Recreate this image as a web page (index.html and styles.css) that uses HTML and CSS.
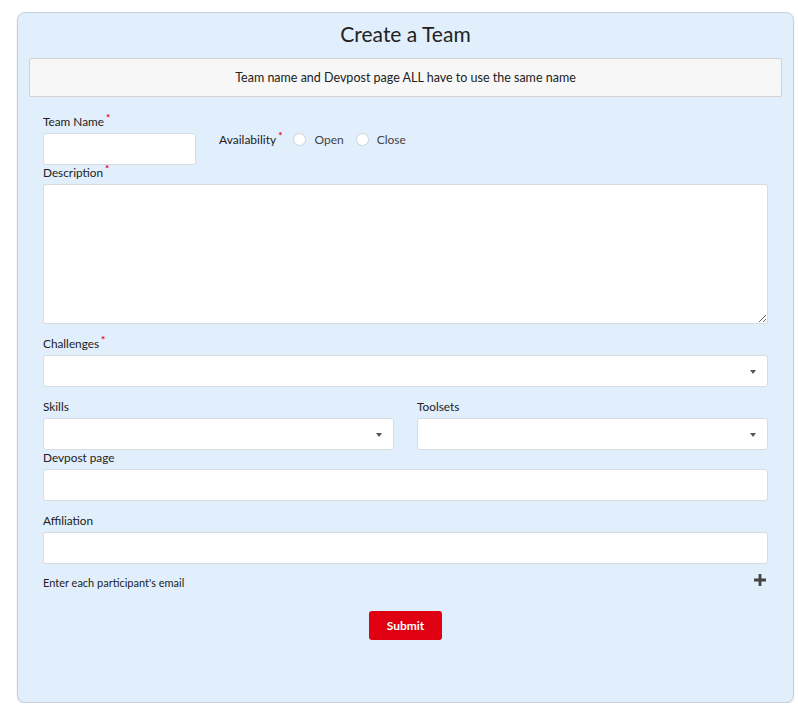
FILE: index.html
```html
<!DOCTYPE html>
<html>
<head>
<meta charset="utf-8">
<link rel="stylesheet" href="styles.css">
</head>
<body>
<div class="card">
  <h1 class="title">Create a Team</h1>
  <div class="notice">Team name and Devpost page ALL have to use the same name</div>
  <form class="form">
    <div class="row-top">
      <div class="field-name">
        <label class="label">Team Name<span class="req">*</span></label>
        <input class="input" type="text">
      </div>
      <div class="avail">
        <span class="avail-label">Availability<span class="req">*</span></span>
        <span class="radio"></span><span class="radio-text">Open</span>
        <span class="radio"></span><span class="radio-text">Close</span>
      </div>
    </div>
    <div class="group gap">
      <label class="label">Description<span class="req">*</span></label>
      <textarea class="textarea"></textarea>
    </div>
    <div class="group gap">
      <label class="label">Challenges<span class="req">*</span></label>
      <div class="select"><span class="caret"></span></div>
    </div>
    <div class="row-two">
      <div class="group">
        <label class="label">Skills</label>
        <div class="select"><span class="caret"></span></div>
      </div>
      <div class="group">
        <label class="label">Toolsets</label>
        <div class="select"><span class="caret"></span></div>
      </div>
    </div>
    <div class="group gap">
      <label class="label">Devpost page</label>
      <input class="input full" type="text">
    </div>
    <div class="group gap2">
      <label class="label">Affiliation</label>
      <input class="input full" type="text">
    </div>
    <div class="email-row">
      <span class="email-text">Enter each participant's email</span>
      <svg class="plus" width="12" height="12" viewBox="0 0 12 12"><path d="M4.6 0h2.8v4.6H12v2.8H7.4V12H4.6V7.4H0V4.6h4.6z" fill="#444"/></svg>
    </div>
    <div class="actions">
      <button class="submit" type="button">Submit</button>
    </div>
  </form>
</div>
</body>
</html>
```
FILE: styles.css
```css
html, body {
  margin: 0;
  padding: 0;
  background: #ffffff;
}
body {
  font-family: Lato, "Open Sans", Arial, sans-serif;
  color: #222;
}
.card {
  margin: 12px 0 0 17px;
  width: 753px;
  height: 689px;
  background: #e1eefc;
  border: 1px solid #c6d0dc;
  border-radius: 8px;
  box-shadow: 0 1px 2px rgba(0,0,0,0.12);
  padding: 0 11px;
}
.title {
  margin: 0;
  padding-top: 8px;
  line-height: 26px;
  height: 26px;
  margin-bottom: 11px;
  font-size: 21px;
  font-weight: 400;
  text-align: center;
  color: #222;
}
.notice {
  background: #f7f7f7;
  border: 1px solid #d2d2d2;
  border-radius: 2px;
  height: 37px;
  line-height: 37px;
  text-align: center;
  font-size: 12.5px;
  color: #222;
}
.form {
  padding: 17px 14px 0 14px;
}
.label {
  display: block;
  font-size: 11.8px;
  line-height: 16px;
  height: 16px;
  margin-bottom: 3px;
  color: #222;
}
.req {
  color: #e0001a;
  font-size: 10px;
  font-weight: 700;
  position: relative;
  top: -5px;
  margin-left: 2px;
}
.row-top {
  display: flex;
  align-items: flex-start;
  gap: 23px;
}
.field-name {
  width: 153px;
}
.input {
  display: block;
  box-sizing: border-box;
  width: 153px;
  height: 32px;
  border: 1px solid #d8dce1;
  border-radius: 3px;
  background: #fff;
  margin: 0;
  padding: 0 8px;
  outline: none;
}
.input.full {
  width: 100%;
}
.avail {
  display: flex;
  align-items: center;
  margin-top: 18px;
  height: 14px;
  font-size: 12px;
}
.avail-label {
  color: #222;
  margin-right: 11px;
}
.radio {
  width: 13px;
  height: 13px;
  box-sizing: border-box;
  border: 1px solid #cdd2d8;
  border-radius: 50%;
  background: #fff;
  margin-right: 8px;
}
.radio-text {
  color: #444;
  margin-right: 12px;
}
.group.gap {
  margin-bottom: 12px;
}
.group.gap2 {
  margin-bottom: 10px;
}
.textarea {
  display: block;
  box-sizing: border-box;
  width: 100%;
  height: 140px;
  border: 1px solid #d8dce1;
  border-radius: 3px;
  background: #fff;
  margin: 1px 0 0 0;
  padding: 6px 8px;
  outline: none;
  resize: both;
}
.select {
  position: relative;
  box-sizing: border-box;
  height: 32px;
  border: 1px solid #d8dce1;
  border-radius: 3px;
  background: #fff;
}
.caret {
  position: absolute;
  right: 11px;
  top: 14px;
  width: 0;
  height: 0;
  border-left: 3.5px solid transparent;
  border-right: 3.5px solid transparent;
  border-top: 4px solid #555;
}
.row-two {
  display: grid;
  grid-template-columns: 1fr 1fr;
  column-gap: 23px;
}
.email-row {
  display: flex;
  justify-content: space-between;
  align-items: center;
  height: 16px;
  font-size: 11px;
  padding-right: 2px;
}
.email-text {
  color: #222;
}
.plus {
  margin-top: -4px;
}
.actions {
  display: flex;
  justify-content: center;
  margin-top: 21px;
}
.submit {
  width: 73px;
  height: 29px;
  background: #df0011;
  color: #fff;
  border: none;
  border-radius: 3px;
  font-family: Lato, "Open Sans", Arial, sans-serif;
  font-weight: 700;
  font-size: 12px;
  padding: 0;
}
```
